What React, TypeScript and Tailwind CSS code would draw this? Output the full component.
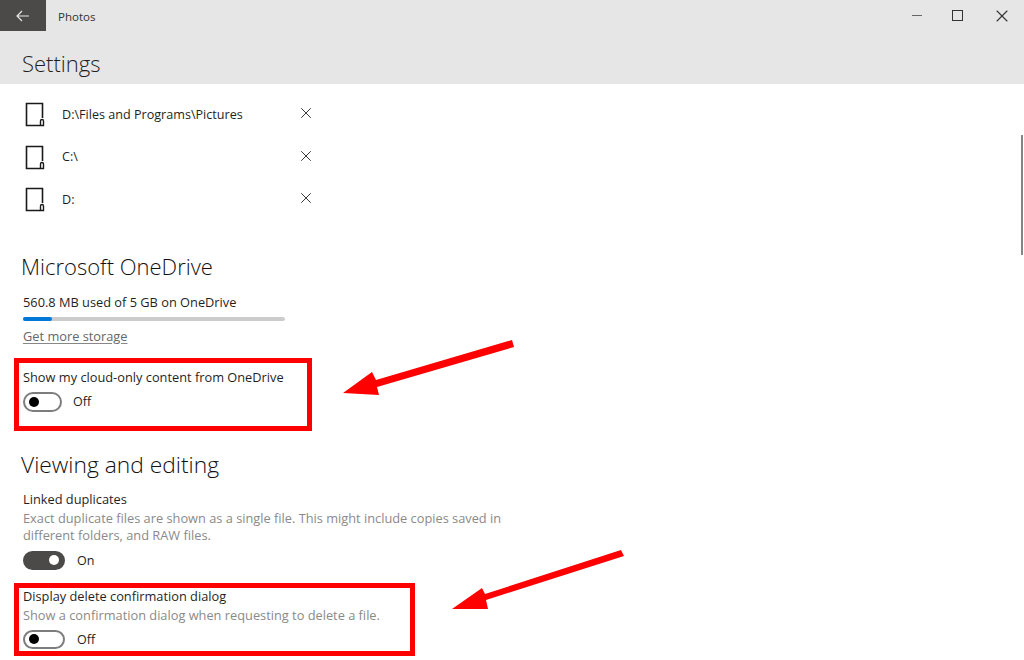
import { X } from 'lucide-react'

const folders = ['D:\\Files and Programs\\Pictures', 'C:\\', 'D:']

function FolderIcon() {
  return (
    <svg width="22" height="26" viewBox="0 0 22 26" fill="none" stroke="#1a1a1a" className="shrink-0">
      <path d="M17.5 16V1.5H1.5V23.5H15" strokeWidth="1.6" />
      <path d="M15.5 23.5V19a1.5 1.5 0 0 1 3 0v4.5z" strokeWidth="1.4" />
    </svg>
  )
}

function Toggle({ on, wide, label }: { on?: boolean; wide?: boolean; label: string }) {
  return (
    <div className="flex items-center">
      <div
        className={`flex items-center rounded-full border-2 ${wide ? 'w-[42px] h-[19px]' : 'w-[39px] h-[20px]'} ${
          on ? 'bg-[#4c4a48] border-[#4c4a48] justify-end pr-[4px]' : 'bg-white border-[#7d7d7d] pl-[4px]'
        }`}
      >
        <div className={`w-[10px] h-[10px] rounded-full ${on ? 'bg-white' : 'bg-black'}`} />
      </div>
      <span className={`${wide ? 'ml-[12px]' : 'ml-[11px]'} translate-y-[1px] text-[12.5px] text-[#222]`}>{label}</span>
    </div>
  )
}

function Arrow({ points, className }: { points: string; className: string }) {
  return (
    <svg viewBox="0 0 200 80" width="200" height="80" className={className}>
      <polygon points={points} fill="#ff0000" />
    </svg>
  )
}

export default function App() {
  return (
    <div className="relative w-[1024px] h-[660px] overflow-hidden bg-white font-['Open_Sans',sans-serif] text-[#1f1f1f]">
      <div className="h-[84px] bg-[#e6e6e6] flex flex-col">
        <div className="h-[32px] flex items-start">
          <div className="w-[46px] h-[31px] bg-[#4c4a48] flex items-center justify-center">
            <svg width="14" height="12" viewBox="0 0 14 12" fill="none" stroke="#e6e6e6" strokeWidth="1.2">
              <path d="M13 6H1M6 1 1 6l5 5" />
            </svg>
          </div>
          <span className="ml-[12px] h-[31px] leading-[33px] text-[11.5px] text-[#333]">Photos</span>
          <div className="ml-auto flex items-center h-[31px] text-[#333] pr-[12px]">
            <div className="w-[10px] h-[1px] bg-[#666]" />
            <div className="ml-[30px] w-[11px] h-[11px] border border-[#333]" />
            <X size={20} strokeWidth={1.3} className="ml-[29px]" />
          </div>
        </div>
        <div className="pl-[22px] pt-[15px] text-[22px] leading-[32px] font-light text-[#1f1f1f]">Settings</div>
      </div>

      <div className="pl-[23px] pt-[10px]">
        {folders.map((f) => (
          <div key={f} className="relative flex items-center h-[42.5px] pl-[2px]">
            <FolderIcon />
            <span className="ml-[15px] text-[12.6px]">{f}</span>
            <X size={18} strokeWidth={1.3} className="absolute left-[274px] top-[10px] text-[#333]" />
          </div>
        ))}

        <h2 className="mt-[29px] -ml-[2px] text-[22px] leading-[30px] font-light text-[#111]">Microsoft OneDrive</h2>
        <div className="mt-[12px] text-[12.8px] leading-[18px]">560.8 MB used of 5 GB on OneDrive</div>
        <div className="mt-[6px] w-[262px] h-[4px] rounded-full bg-[#cccccc]">
          <div className="w-[29px] h-[4px] rounded-full bg-[#0078d7]" />
        </div>
        <div className="mt-[6px] text-[12.8px] leading-[18px] text-[#666] underline decoration-[#888] underline-offset-2">
          Get more storage
        </div>

        <div className="mt-[23px] text-[12.8px] leading-[18px]">Show my cloud-only content from OneDrive</div>
        <div className="mt-[6px]">
          <Toggle label="Off" />
        </div>

        <h2 className="mt-[38px] -ml-[2px] text-[22.8px] leading-[30px] font-light text-[#111]">Viewing and editing</h2>
        <div className="mt-[10px] text-[12.8px] leading-[18px]">Linked duplicates</div>
        <div className="mt-[2px] w-[500px] text-[12.8px] leading-[17px] text-[#8a8a8a]">
          Exact duplicate files are shown as a single file. This might include copies saved in different folders, and RAW files.
        </div>
        <div className="mt-[7px]">
          <Toggle on wide label="On" />
        </div>
        <div className="mt-[17px] text-[12.8px] leading-[18px]">Display delete confirmation dialog</div>
        <div className="mt-[1px] text-[12.8px] leading-[18px] text-[#8a8a8a]">
          Show a confirmation dialog when requesting to delete a file.
        </div>
        <div className="mt-[6px]">
          <Toggle wide label="Off" />
        </div>
      </div>

      {/* scrollbar */}
      <div className="absolute left-[1021px] top-[135px] w-[2px] h-[120px] bg-[#858585]" />

      {/* annotations */}
      <div className="absolute left-[14px] top-[358px] w-[298px] h-[73px] border-[5px] border-[#ff0000]" />
      <div className="absolute left-[14px] top-[583px] w-[401px] h-[73px] border-[5px] border-[#ff0000]" />
      <Arrow
        className="absolute left-[330px] top-[330px]"
        points="182,10 184,17 47,57 49,65 13,63 42,42 46,50"
      />
      <Arrow
        className="absolute left-[440px] top-[540px]"
        points="181,10 184,16 46,60 48,69 12,69 42,48 45,54"
      />
    </div>
  )
}
